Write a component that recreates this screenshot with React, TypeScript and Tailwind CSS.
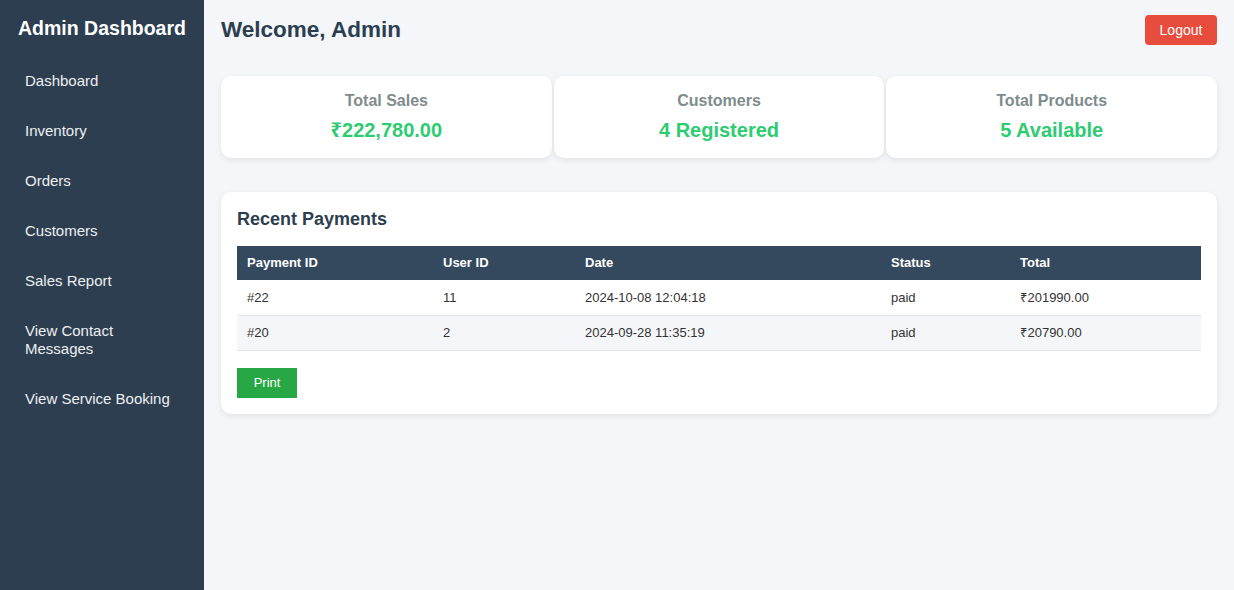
import React from "react";

const navItems = [
  "Dashboard",
  "Inventory",
  "Orders",
  "Customers",
  "Sales Report",
  "View Contact Messages",
  "View Service Booking",
];

const stats = [
  { title: "Total Sales", value: "₹222,780.00" },
  { title: "Customers", value: "4 Registered" },
  { title: "Total Products", value: "5 Available" },
];

const payments = [
  { id: "#22", user: "11", date: "2024-10-08 12:04:18", status: "paid", total: "₹201990.00" },
  { id: "#20", user: "2", date: "2024-09-28 11:35:19", status: "paid", total: "₹20790.00" },
];

function Sidebar() {
  return (
    <aside className="w-[204px] shrink-0 bg-[#2c3e50] px-5 pt-[16px] min-h-[590px]">
      <h2 className="-mx-5 whitespace-nowrap text-center text-[19.5px] leading-[24px] font-bold text-white">
        Admin Dashboard
      </h2>
      <nav className="mt-4">
        <ul>
          {navItems.map((item) => (
            <li key={item}>
              <a
                href="#"
                className="block px-[5px] py-4 text-[15px] leading-[18px] text-[#ecf0f1] hover:bg-[#34495e]"
              >
                {item}
              </a>
            </li>
          ))}
        </ul>
      </nav>
    </aside>
  );
}

function StatCard({ title, value }: { title: string; value: string }) {
  return (
    <div className="flex-1 rounded-[10px] bg-white pt-[15px] pb-[16px] text-center shadow-[0_2px_6px_rgba(0,0,0,0.08)]">
      <h3 className="text-[16px] leading-[19px] font-bold text-[#7f8c8d]">{title}</h3>
      <p className="mt-[8px] text-[20px] leading-[24px] font-bold text-[#2ecc71]">{value}</p>
    </div>
  );
}

function PaymentsTable() {
  return (
    <table className="w-full border-collapse text-[13px] text-[#333]">
      <thead>
        <tr className="bg-[#34495e] text-left text-white">
          <th className="h-[34px] w-[196px] px-[10px] font-bold">Payment ID</th>
          <th className="h-[34px] w-[142px] px-[10px] font-bold">User ID</th>
          <th className="h-[34px] w-[306px] px-[10px] font-bold">Date</th>
          <th className="h-[34px] w-[129px] px-[10px] font-bold">Status</th>
          <th className="h-[34px] px-[10px] font-bold">Total</th>
        </tr>
      </thead>
      <tbody>
        {payments.map((p, i) => (
          <tr
            key={p.id}
            className={`border-b border-[#e3e6ea] ${i % 2 === 1 ? "bg-[#f4f6f9]" : "bg-white"}`}
          >
            <td className="h-[35px] px-[10px]">{p.id}</td>
            <td className="h-[35px] px-[10px]">{p.user}</td>
            <td className="h-[35px] px-[10px]">{p.date}</td>
            <td className="h-[35px] px-[10px]">{p.status}</td>
            <td className="h-[35px] px-[10px]">{p.total}</td>
          </tr>
        ))}
      </tbody>
    </table>
  );
}

export default function App() {
  return (
    <div
      className="flex min-h-[590px] bg-[#f4f6f9]"
      style={{ fontFamily: '"Liberation Sans", Arial, "Noto Sans", sans-serif' }}
    >
      <Sidebar />
      <main className="flex-1 px-[17px] pt-[15px]">
        <header className="flex h-[30px] items-center justify-between">
          <h1 className="text-[22.5px] font-bold text-[#2c3e50]">Welcome, Admin</h1>
          <button className="h-[30px] w-[72px] rounded-[4px] bg-[#e74c3c] text-[14px] text-white">
            Logout
          </button>
        </header>

        <section className="mt-[31px] flex gap-[2px]">
          {stats.map((s) => (
            <StatCard key={s.title} title={s.title} value={s.value} />
          ))}
        </section>

        <section className="mt-[34px] rounded-[10px] bg-white px-4 pt-4 pb-4 shadow-[0_2px_6px_rgba(0,0,0,0.08)]">
          <h2 className="text-[18px] leading-[22px] font-bold text-[#2c3e50]">Recent Payments</h2>
          <div className="mt-4">
            <PaymentsTable />
          </div>
          <button className="mt-[17px] h-[30px] w-[60px] bg-[#28a745] text-[13px] text-white">
            Print
          </button>
        </section>
      </main>
    </div>
  );
}
